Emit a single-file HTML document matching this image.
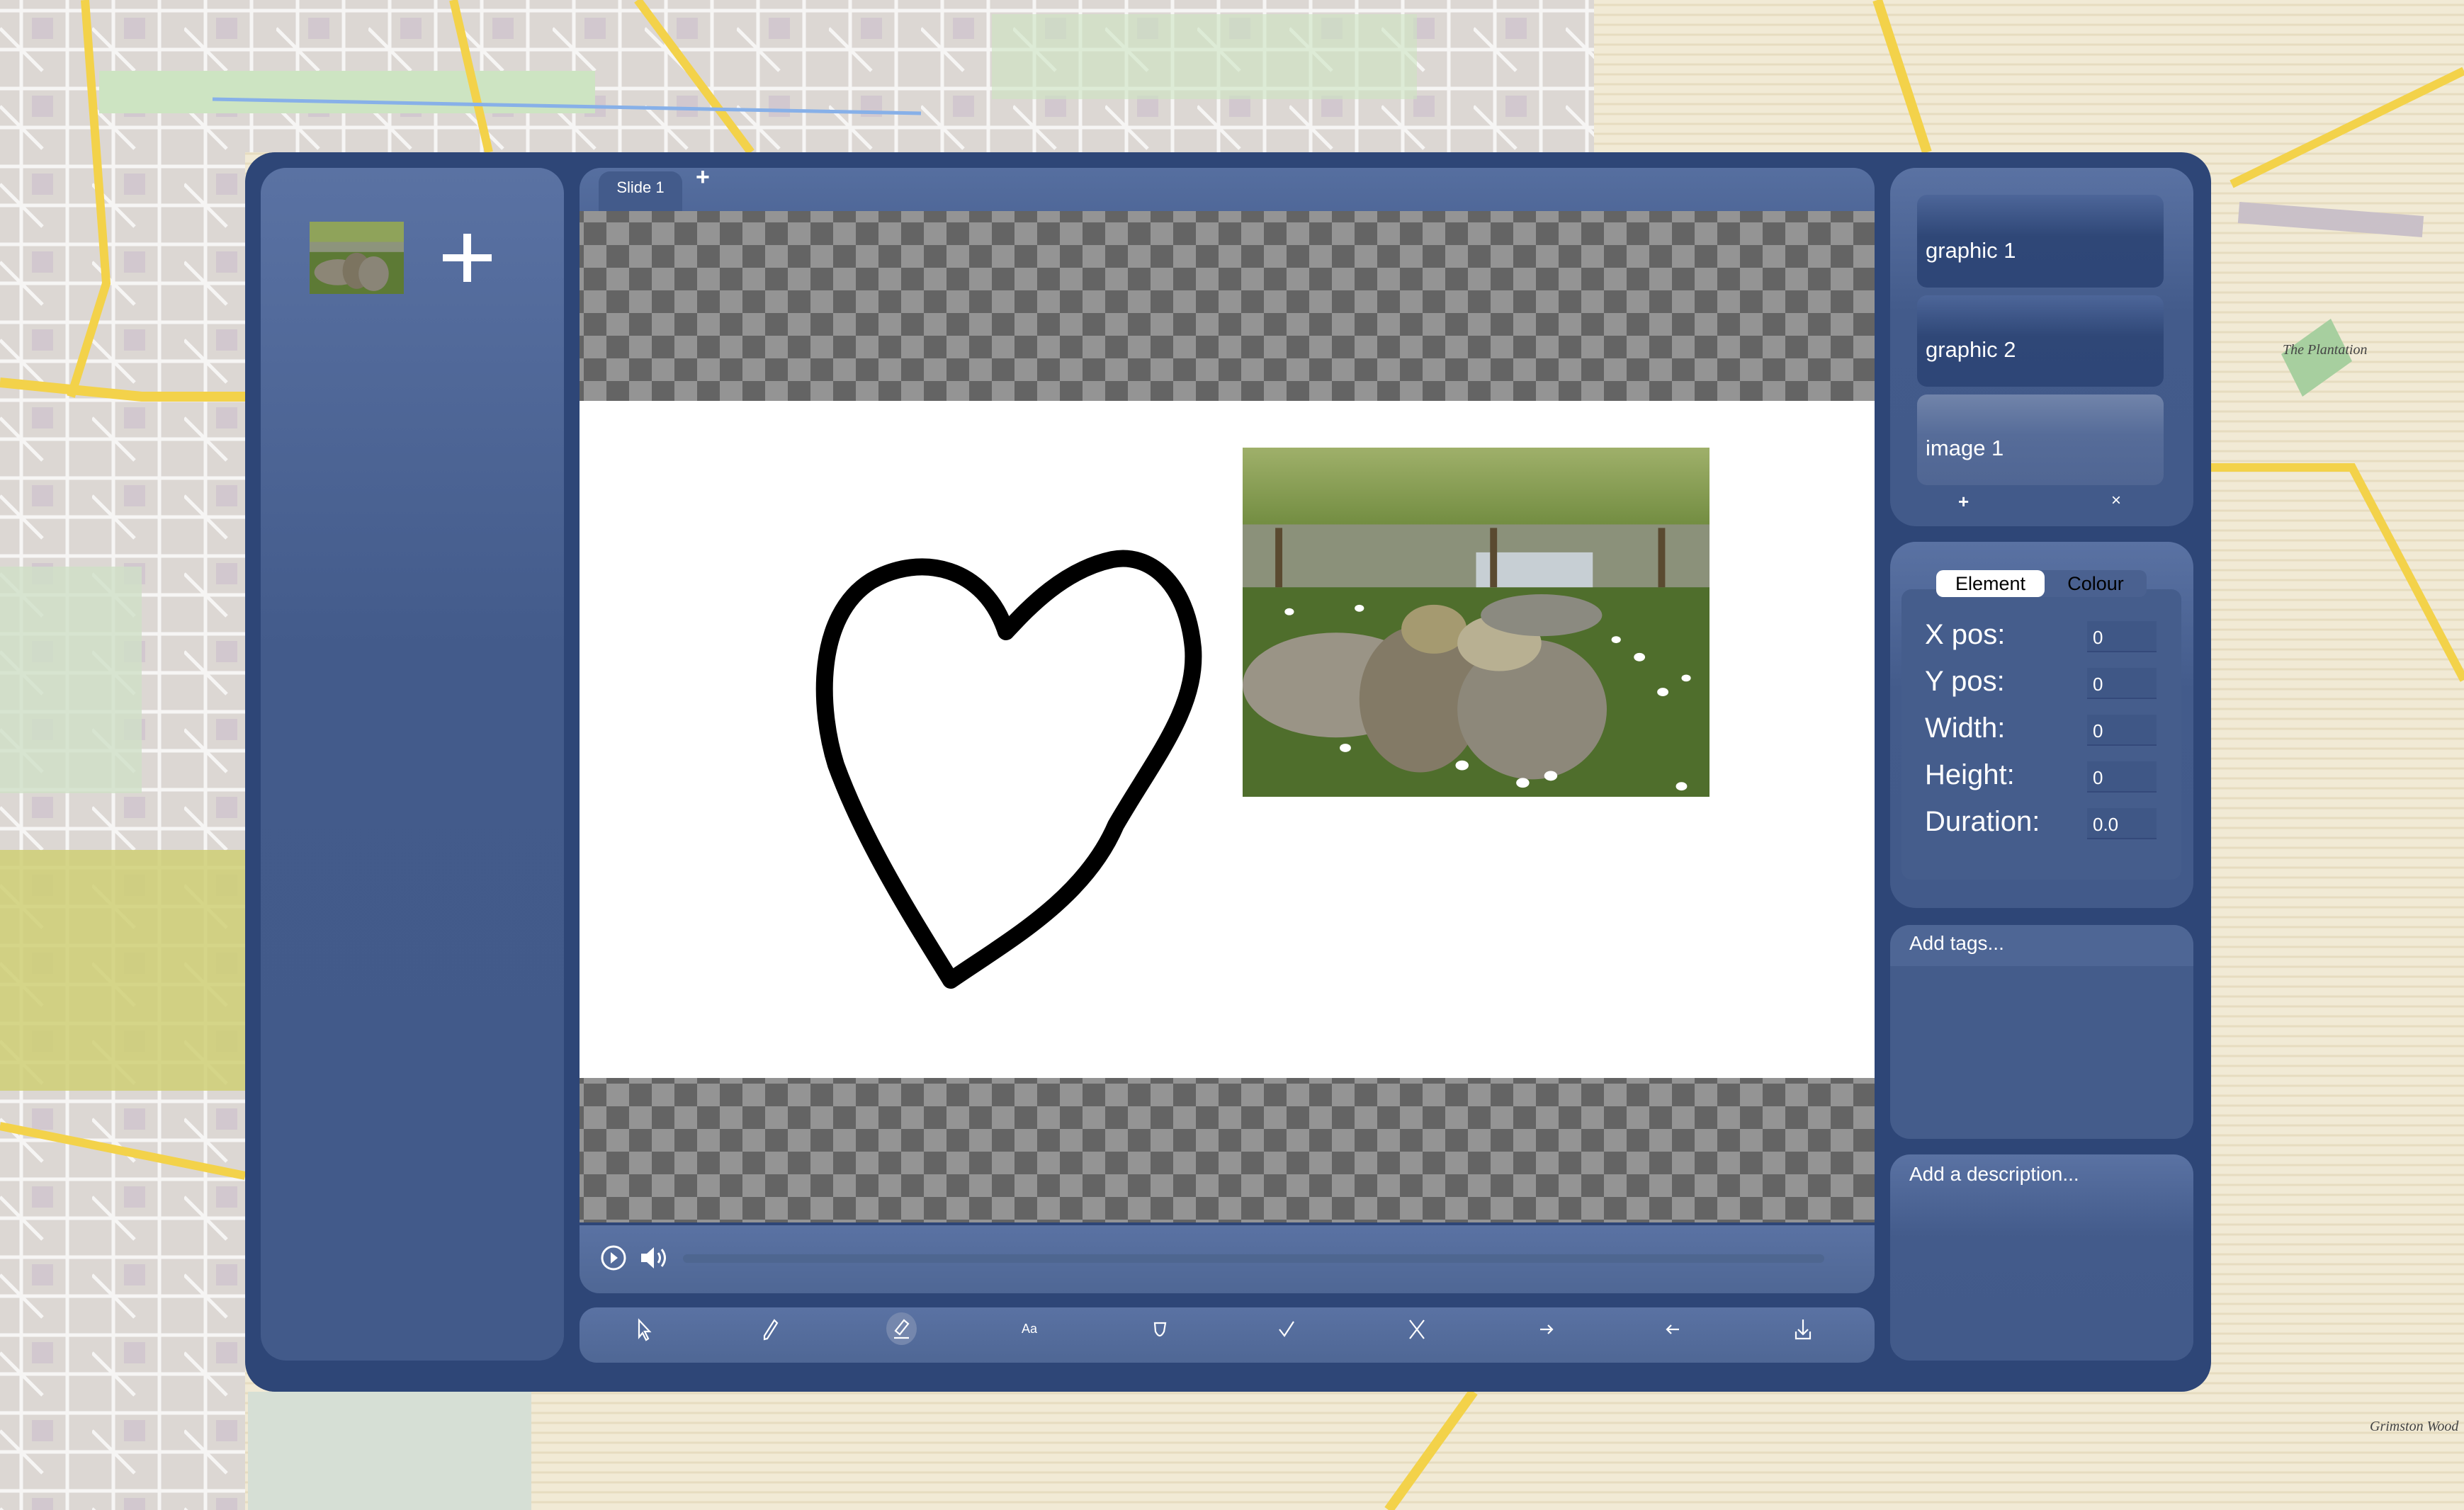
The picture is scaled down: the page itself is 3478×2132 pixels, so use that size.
<!DOCTYPE html>
<html><head><meta charset="utf-8"><style>
*{margin:0;padding:0;box-sizing:border-box}
body{width:3478px;height:2132px;overflow:hidden;position:relative;background:#efe8d6;font-family:"Liberation Sans",sans-serif}
.a{position:absolute}
.panel{position:absolute;background:linear-gradient(#5a72a3,#435b8b 40%,#425a8a);border-radius:36px}
.item{position:absolute;left:2706px;width:348px;border-radius:14px;color:#fff;font-size:31px;padding-left:12px;display:flex;align-items:flex-end;padding-bottom:34px;background:linear-gradient(#4d6699,#2f4777 45%,#2e4677)}
.lbl{position:absolute;left:2717px;color:#fff;font-size:40px}
.inp{position:absolute;left:2946px;width:98px;height:44px;background:#3f5786;border-bottom:2px solid #34497a;color:#fff;font-size:26px;padding:8px 0 0 8px}
</style></head><body>
<svg class="a" style="left:0;top:0" width="3478" height="2132">
<defs>
<pattern id="hz" width="14" height="14" patternUnits="userSpaceOnUse"><rect width="14" height="14" fill="#f1ead5"/><path d="M0 7H14" stroke="#e6dcc0" stroke-width="3"/></pattern>
<pattern id="st" width="130" height="110" patternUnits="userSpaceOnUse"><rect width="130" height="110" fill="#dcd7d3"/><path d="M0 15H130 M0 70H130 M30 0V110 M95 0V110 M0 40 L60 100" stroke="#f6f5f4" stroke-width="5"/><path d="M45 25h30v30h-30z" fill="#d2c8cf"/></pattern>
</defs>
<rect width="3478" height="2132" fill="url(#hz)"/>
<rect x="0" y="0" width="346" height="2132" fill="url(#st)"/>
<rect x="0" y="0" width="2250" height="215" fill="url(#st)"/>
<rect x="0" y="800" width="200" height="320" fill="#cfe0c7" opacity=".8"/>
<rect x="0" y="1200" width="346" height="340" fill="#cfcf74" opacity=".85"/>
<rect x="140" y="100" width="700" height="60" fill="#cde4c2"/>
<rect x="1400" y="20" width="600" height="120" fill="#cde4c2" opacity=".6"/>
<rect x="350" y="1965" width="400" height="167" fill="#d6dfd5"/>
<path d="M0 540 L200 560 L346 560" stroke="#f3d24a" stroke-width="14" fill="none"/>
<path d="M120 0 L150 400 L100 560" stroke="#f3d24a" stroke-width="12" fill="none"/>
<path d="M0 1590 L346 1660" stroke="#f3d24a" stroke-width="12" fill="none"/>
<path d="M640 0 L690 215" stroke="#f3d24a" stroke-width="12" fill="none"/>
<path d="M900 0 L1060 215" stroke="#f3d24a" stroke-width="12" fill="none"/>
<path d="M2650 0 L2720 215" stroke="#f3d24a" stroke-width="14" fill="none"/>
<path d="M3150 260 L3478 100" stroke="#f3d24a" stroke-width="12" fill="none"/>
<path d="M3121 660 L3320 660 L3478 960" stroke="#f3d24a" stroke-width="12" fill="none"/>
<path d="M2080 1965 L1960 2132" stroke="#f3d24a" stroke-width="14" fill="none"/>
<path d="M3160 300 L3420 320" stroke="#c9c0c8" stroke-width="30" fill="none"/>
<path d="M3220 500 L3290 450 L3320 510 L3250 560 Z" fill="#a7cf9f"/>
<path d="M300 140 L1300 160" stroke="#87b0e8" stroke-width="5" fill="none"/>
<text x="3222" y="500" font-size="20" font-style="italic" fill="#444" font-family="Liberation Serif">The Plantation</text>
<text x="3345" y="2020" font-size="20" font-style="italic" fill="#444" font-family="Liberation Serif">Grimston Wood</text>
</svg>
<div class="a" style="left:346px;top:215px;width:2775px;height:1750px;background:#2e4677;border-radius:42px"></div>
<div class="panel" style="left:368px;top:237px;width:428px;height:1684px"></div>
<svg class="a" style="left:437px;top:313px" width="133" height="102" viewBox="0 0 100 100" preserveAspectRatio="none">
<rect width="100" height="100" fill="#5d7a35"/><rect width="100" height="30" fill="#8fa35a"/><rect y="28" width="100" height="14" fill="#8d947c"/>
<ellipse cx="30" cy="70" rx="25" ry="18" fill="#8c8676"/><ellipse cx="50" cy="68" rx="15" ry="25" fill="#7c7460"/><ellipse cx="68" cy="72" rx="16" ry="24" fill="#8a8577"/></svg>
<div class="a" style="left:625px;top:359px;width:69px;height:10px;background:#fff"></div>
<div class="a" style="left:654px;top:330px;width:11px;height:68px;background:#fff"></div>
<div class="panel" style="left:818px;top:237px;width:1828px;height:100px;border-radius:30px 30px 0 0;background:linear-gradient(#566fa0,#4b6394)"></div>
<div class="a" style="left:845px;top:242px;width:118px;height:56px;background:#435b8b;border-radius:16px 16px 0 0;color:#fff;font-size:22px;text-align:center;padding-top:10px">Slide 1</div>
<div class="a" style="left:982px;top:231px;color:#fff;font-size:34px;font-weight:bold">+</div>
<div class="a" style="left:818px;top:298px;width:1828px;height:1428px;background-color:#949494;background-image:conic-gradient(#646464 25%,#949494 0 50%,#646464 0 75%,#949494 0);background-size:64px 64px;background-position:6px -16px"></div>
<div class="a" style="left:818px;top:566px;width:1828px;height:956px;background:#fff"></div>
<svg class="a" style="left:0;top:0" width="3478" height="2132">
<path d="M1420 892 C1390 800 1300 780 1230 820 C1150 870 1155 1000 1180 1080 C1220 1190 1290 1300 1342 1384 C1420 1330 1530 1270 1575 1165 C1630 1070 1690 1000 1684 915 C1675 820 1620 780 1570 790 C1500 805 1450 860 1420 892 Z" fill="none" stroke="#000" stroke-width="24" stroke-linejoin="round"/>
</svg>
<svg class="a" style="left:1754px;top:632px" width="659" height="493" viewBox="0 0 100 100" preserveAspectRatio="none">
<defs><linearGradient id="tr" x1="0" y1="0" x2="0" y2="1"><stop offset="0" stop-color="#9fb06a"/><stop offset="1" stop-color="#6f8a3e"/></linearGradient></defs>
<rect width="100" height="100" fill="#4f6e2c"/>
<rect width="100" height="24" fill="url(#tr)"/>
<rect y="22" width="100" height="18" fill="#8b917a"/>
<rect x="50" y="30" width="25" height="10" fill="#c7cfd4"/>
<rect x="7" y="23" width="1.5" height="17" fill="#5a4a30"/><rect x="53" y="23" width="1.5" height="17" fill="#5a4a30"/><rect x="89" y="23" width="1.5" height="17" fill="#5a4a30"/>
<ellipse cx="20" cy="68" rx="20" ry="15" fill="#9a9486"/>
<ellipse cx="38" cy="72" rx="13" ry="21" fill="#837a66"/>
<ellipse cx="41" cy="52" rx="7" ry="7" fill="#a59a70"/>
<ellipse cx="62" cy="75" rx="16" ry="20" fill="#8d887a"/>
<ellipse cx="55" cy="56" rx="9" ry="8" fill="#b8b092"/>
<ellipse cx="64" cy="48" rx="13" ry="6" fill="#8b8a80"/>
<g fill="#fff"><circle cx="85" cy="60" r="1.2"/><circle cx="90" cy="70" r="1.2"/><circle cx="80" cy="55" r="1"/><circle cx="95" cy="66" r="1"/><circle cx="22" cy="86" r="1.2"/><circle cx="47" cy="91" r="1.4"/><circle cx="60" cy="96" r="1.4"/><circle cx="66" cy="94" r="1.4"/><circle cx="10" cy="47" r="1"/><circle cx="25" cy="46" r="1"/><circle cx="94" cy="97" r="1.2"/></g>
</svg>
<div class="a" style="left:818px;top:1730px;width:1828px;height:96px;background:linear-gradient(#5a72a3,#4f6795);border-radius:0 0 28px 28px"></div>
<svg class="a" style="left:846px;top:1756px" width="40" height="40"><circle cx="20" cy="20" r="16" fill="none" stroke="#fff" stroke-width="3"/><path d="M16 12 L26 20 L16 28 Z" fill="#fff"/></svg>
<svg class="a" style="left:903px;top:1758px" width="44" height="36"><path d="M2 12 H10 L20 3 V33 L10 24 H2 Z" fill="#fff"/><path d="M26 11 Q31 18 26 25 M31 6 Q40 18 31 30" fill="none" stroke="#fff" stroke-width="3"/></svg>
<div class="a" style="left:964px;top:1771px;width:1611px;height:12px;background:#4e6690;border-radius:6px"></div>
<div class="a" style="left:818px;top:1846px;width:1828px;height:78px;background:linear-gradient(#5a72a3,#4f6795);border-radius:24px"></div>
<div class="a" style="left:1251px;top:1853px;width:43px;height:46px;background:#7587ad;border-radius:50%"></div>
<svg class="a" style="left:0;top:0" width="3478" height="2132" fill="none" stroke="#fff" stroke-width="2.2">
<path d="M902 1864 L902 1888 L907 1882 L912 1892 L915 1890 L910 1880 L917 1880 Z"/>
<path d="M1093 1864 L1097 1868 L1083 1890 L1079 1891 L1079 1886 Z"/>
<path d="M1276 1864 L1282 1869 L1270 1884 L1264 1879 Z M1262 1889 H1283"/>
<text x="1442" y="1882" font-size="18" fill="#fff" stroke="none" font-family="Liberation Sans">Aa</text>
<path d="M1630 1868 H1645 L1643 1880 Q1637 1892 1631 1880 Z"/>
<path d="M1806 1877 L1813 1886 L1826 1866"/>
<path d="M1990 1864 L2010 1890 M2010 1864 L1990 1890"/>
<path d="M2174 1877 H2190 M2185 1871 L2191 1877 L2185 1883"/>
<path d="M2370 1877 H2354 M2359 1871 L2353 1877 L2359 1883"/>
<path d="M2545 1863 V1884 M2538 1877 L2545 1884 L2552 1877 M2535 1880 V1890 H2555 V1880"/>
</svg>
<div class="panel" style="left:2668px;top:237px;width:428px;height:506px"></div>
<div class="item" style="top:275px;height:131px">graphic 1</div>
<div class="item" style="top:417px;height:129px">graphic 2</div>
<div class="item" style="top:557px;height:128px;background:linear-gradient(#7184aa,#566c99 45%,#506693)">image 1</div>
<div class="a" style="left:2764px;top:693px;color:#fff;font-size:26px;font-weight:bold">+</div>
<div class="a" style="left:2980px;top:693px;color:#fff;font-size:24px">×</div>
<div class="panel" style="left:2668px;top:765px;width:428px;height:517px"></div>
<div class="a" style="left:2684px;top:832px;width:395px;height:410px;background:#455d8c;border-radius:14px"></div>
<div class="a" style="left:2733px;top:805px;width:297px;height:38px;background:#4a6190;border-radius:10px"></div>
<div class="a" style="left:2733px;top:805px;width:153px;height:38px;background:#fff;border-radius:10px;color:#000;font-size:27px;text-align:center;line-height:38px">Element</div>
<div class="a" style="left:2886px;top:805px;width:144px;height:38px;color:#000;font-size:27px;text-align:center;line-height:38px">Colour</div>
<div class="lbl" style="top:874px">X pos:</div><div class="inp" style="top:877px">0</div>
<div class="lbl" style="top:940px">Y pos:</div><div class="inp" style="top:943px">0</div>
<div class="lbl" style="top:1006px">Width:</div><div class="inp" style="top:1009px">0</div>
<div class="lbl" style="top:1072px">Height:</div><div class="inp" style="top:1075px">0</div>
<div class="lbl" style="top:1138px">Duration:</div><div class="inp" style="top:1141px">0.0</div>
<div class="panel" style="left:2668px;top:1306px;width:428px;height:302px;border-radius:28px;background:#445c8b"></div>
<div class="a" style="left:2668px;top:1306px;width:428px;height:58px;background:#4e6695;border-radius:28px 28px 0 0"></div>
<div class="a" style="left:2695px;top:1316px;color:#fff;font-size:28px">Add tags...</div>
<div class="panel" style="left:2668px;top:1630px;width:428px;height:291px;border-radius:28px"></div>
<div class="a" style="left:2695px;top:1642px;color:#fff;font-size:28px">Add a description...</div>
</body></html>
